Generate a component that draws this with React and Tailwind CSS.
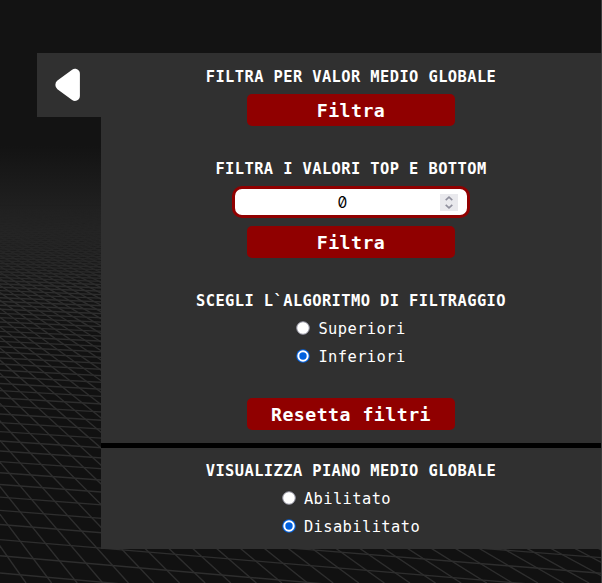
import React from "react";

const HORIZON = 70;

function FloorGrid() {
  const rows = Array.from({ length: 150 }, (_, i) => {
    const n = i - 13;
    const y = HORIZON + 1 / (1 / 344 + n * 7.069e-5);
    return { y1: y, y2: y + ((y - HORIZON) / 5600) * 602 };
  });
  const cols = Array.from({ length: 75 }, (_, i) => 26 + 25.6 * i);
  return (
    <svg className="absolute inset-0" width="602" height="583" viewBox="0 0 602 583">
      <defs>
        <linearGradient id="haze" x1="0" y1="0" x2="0" y2="1">
          <stop offset="0" stopColor="#131313" />
          <stop offset="0.25" stopColor="#131313" />
          <stop offset="0.36" stopColor="#202020" />
          <stop offset="0.4" stopColor="#202020" />
          <stop offset="0.5" stopColor="#141414" />
          <stop offset="0.6" stopColor="#111111" />
          <stop offset="1" stopColor="#111111" />
        </linearGradient>
        <linearGradient id="fade" gradientUnits="userSpaceOnUse" x1="0" y1="205" x2="0" y2="290">
          <stop offset="0" stopColor="#000" />
          <stop offset="1" stopColor="#fff" />
        </linearGradient>
        <mask id="near" maskUnits="userSpaceOnUse" x="0" y="0" width="602" height="583">
          <rect width="602" height="583" fill="url(#fade)" />
        </mask>
      </defs>
      <rect width="602" height="583" fill="url(#haze)" />
      <g mask="url(#near)" stroke="#2e2e2e" strokeWidth="1.4">
        {rows.map((r, i) => (
          <line key={i} x1="0" y1={r.y1} x2="602" y2={r.y2} />
        ))}
        {cols.map((x, i) => (
          <line key={i} x1="-334" y1={HORIZON} x2={x} y2="583" />
        ))}
      </g>
    </svg>
  );
}

function Title({ children }) {
  return (
    <h2 className="h-7 whitespace-pre text-[15.4px] leading-7 font-bold tracking-[0.42px]">
      {children}
    </h2>
  );
}

function Button({ children }) {
  return (
    <button className="h-8 w-52 rounded-[5px] bg-[#900000] pt-px text-[18.2px] leading-[31px] font-bold tracking-[0.48px] text-white">
      {children}
    </button>
  );
}

function Radio({ label, checked }) {
  return (
    <label className="flex h-7 items-center">
      <svg width="14" height="14" viewBox="0 0 14 14">
        {checked ? (
          <>
            <circle cx="7" cy="7" r="6.8" fill="#0060df" />
            <circle cx="7" cy="7" r="5.7" fill="#fff" />
            <circle cx="7" cy="7" r="3.7" fill="#0060df" />
          </>
        ) : (
          <circle cx="7" cy="7" r="6.3" fill="#fff" stroke="#8f8f9d" strokeWidth="1" />
        )}
      </svg>
      <span className="ml-2 pt-px text-[15.4px] leading-7 tracking-[0.42px]">{label}</span>
    </label>
  );
}

function NumberInput() {
  return (
    <div className="flex h-8 w-[238px] items-center rounded-[10px] border-[3px] border-[#900000] bg-white pr-[9px] text-black">
      <span className="flex-1 pt-0.5 pl-[10px] text-center font-['Inter',sans-serif] text-[15.5px] leading-6 slashed-zero">
        0
      </span>
      <span className="flex h-[17px] w-[18px] items-center justify-center bg-[#e9e9ed]">
        <svg width="10" height="15" viewBox="0 0 10 15" fill="none" stroke="#8f8f9d" strokeWidth="1.6">
          <path d="M1.7 5.2 5 2.2l3.3 3M1.7 9.8l3.3 3 3.3-3" />
        </svg>
      </span>
    </div>
  );
}

export default function App() {
  return (
    <div className="relative h-[583px] w-[602px] overflow-hidden border-r border-[#3c3c3c] bg-[#121212] font-['DejaVu_Sans_Mono',monospace] text-white">
      <FloorGrid />
      <div className="relative flex h-full items-start pt-[53px] pl-[37px]">
        <button className="flex size-16 items-center justify-center bg-[#303030]">
          <svg width="64" height="64" viewBox="0 0 64 64">
            <path
              d="M38 20.7V43L23.3 32.3V31.4Z"
              fill="#fff"
              stroke="#fff"
              strokeWidth="9.8"
              strokeLinejoin="round"
            />
          </svg>
        </button>
        <main className="flex h-[496px] w-[500px] flex-col items-center bg-[#303030]">
          <section className="flex flex-col items-center pt-[10px]">
            <Title>FILTRA PER VALOR MEDIO GLOBALE</Title>
            <div className="mt-[3px]">
              <Button>Filtra</Button>
            </div>
          </section>
          <section className="mt-[29px] flex flex-col items-center">
            <Title>FILTRA I VALORI TOP E BOTTOM</Title>
            <div className="mt-[3px]">
              <NumberInput />
            </div>
            <div className="mt-2">
              <Button>Filtra</Button>
            </div>
          </section>
          <section className="mt-[29px] flex flex-col items-center">
            <Title>SCEGLI L`ALGORITMO DI FILTRAGGIO</Title>
            <div className="-mt-px">
              <Radio label="Superiori" />
              <Radio label="Inferiori" checked />
            </div>
            <div className="mt-7">
              <Button>Resetta filtri</Button>
            </div>
          </section>
          <section className="mt-[13px] flex w-full flex-col items-center border-t-[5px] border-black pt-[9px]">
            <Title>VISUALIZZA PIANO MEDIO GLOBALE</Title>
            <div className="-mt-px">
              <Radio label="Abilitato" />
              <Radio label="Disabilitato" checked />
            </div>
          </section>
        </main>
      </div>
    </div>
  );
}
